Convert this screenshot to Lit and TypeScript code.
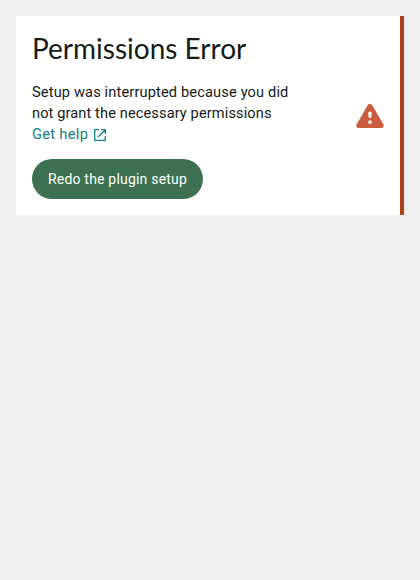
import { LitElement, html, css } from "lit";
import { customElement } from "lit/decorators.js";

@customElement("app-root")
export class AppRoot extends LitElement {
  static styles = css`
    :host { display: block; box-sizing: border-box; min-height: 100vh; padding: 16px; background: #f0f0f0; font-family: Roboto, "Liberation Sans", sans-serif; color: #161b18; }
    .notice { box-sizing: border-box; height: 199px; display: flex; align-items: center; justify-content: space-between; background: #fff; border-right: 4px solid #b0401c; padding: 16px; }
    .content { height: 167px; white-space: nowrap; }
    .title { margin: 0; font-family: Lato, sans-serif; font-size: 28px; line-height: 33px; font-weight: 400; }
    .text { margin: 17px 0 14px; font-size: 14.6px; line-height: 21px; letter-spacing: 0.15px; }
    .line { display: block; height: 21px; }
    .line.second { letter-spacing: 0.11px; }
    .link { display: flex; align-items: center; color: #108080; text-decoration: none; height: 21px; letter-spacing: 0.32px; }
    .link svg { margin: 1px 0 0 5.6px; }
    .button { display: flex; align-items: center; justify-content: center; width: 171px; height: 40px; padding: 0; border: 0; border-radius: 20px; background: #3c7251; color: #fff; font: 400 14px/20px Roboto, sans-serif; letter-spacing: 0.2px; }
    .warning { flex: none; display: block; }
  `;
  render() {
    return html`<section class="notice">
      <div class="content">
        <h1 class="title">Permissions Error</h1>
        <div class="text">
          <span class="line">Setup was interrupted because you did</span>
          <span class="line second">not grant the necessary permissions</span>
          <a class="link" href="#">Get help
            <svg width="12" height="12" viewBox="0 0 12 12" fill="none" stroke="currentColor" stroke-width="1.3"><path d="M5 .7H.7v10.6h10.6V7M7 .7h4.3V5M11.3.7 4 8"/></svg></a>
        </div>
        <button class="button">Redo the plugin setup</button>
      </div>
      <svg class="warning" width="28" height="25" viewBox="0 0 28 25"><path d="M14 3.3 25.2 22.5h-22.4Z" fill="#cb5d3d" stroke="#cb5d3d" stroke-width="5" stroke-linejoin="round"/><rect x="12.4" y="8.7" width="3.2" height="6" rx="1" fill="#fff"/><rect x="12.4" y="17.5" width="3.2" height="3.2" rx=".8" fill="#fff"/></svg>
    </section>`;
  }
}
